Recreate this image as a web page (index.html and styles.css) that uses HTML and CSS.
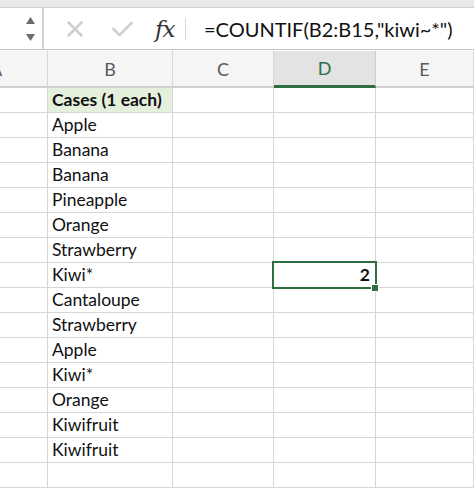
FILE: index.html
```html
<!DOCTYPE html>
<html>
<head>
<meta charset="utf-8">
<link rel="stylesheet" href="styles.css">
</head>
<body>
<div class="app">
  <div class="topstrip"></div>
  <div class="fbar">
    <div class="namebox">
      <div class="stepper">
        <svg width="9" height="8" viewBox="0 0 9 8"><polygon points="4.5,0 9,7 0,7" fill="#6b6b6b"/></svg>
        <svg width="9" height="8" viewBox="0 0 9 8"><polygon points="0,0 9,0 4.5,7" fill="#6b6b6b"/></svg>
      </div>
    </div>
    <div class="icons">
      <svg class="ico-x" width="16" height="16" viewBox="0 0 16 16"><path d="M1.5 1.5 L14.5 14.5 M14.5 1.5 L1.5 14.5" stroke="#cfcfcf" stroke-width="2.6" stroke-linecap="round"/></svg>
      <svg class="ico-check" width="21" height="16" viewBox="0 0 21 16"><path d="M1.5 8 L7.5 14 L19.5 2" stroke="#cfcfcf" stroke-width="2.6" fill="none" stroke-linecap="round" stroke-linejoin="round"/></svg>
      <span class="fx">fx</span>
      <span class="sep"></span>
    </div>
    <div class="formula">=COUNTIF(B2:B15,"kiwi~*")</div>
  </div>
  <div class="sheet">
    <div class="hdr colA"><span class="acut">A</span></div>
    <div class="hdr">B</div>
    <div class="hdr">C</div>
    <div class="hdr active">D</div>
    <div class="hdr">E</div>

    <div class="c"></div><div class="c b title">Cases (1 each)</div><div class="c"></div><div class="c"></div><div class="c"></div>
    <div class="c"></div><div class="c b">Apple</div><div class="c"></div><div class="c"></div><div class="c"></div>
    <div class="c"></div><div class="c b">Banana</div><div class="c"></div><div class="c"></div><div class="c"></div>
    <div class="c"></div><div class="c b">Banana</div><div class="c"></div><div class="c"></div><div class="c"></div>
    <div class="c"></div><div class="c b">Pineapple</div><div class="c"></div><div class="c"></div><div class="c"></div>
    <div class="c"></div><div class="c b">Orange</div><div class="c"></div><div class="c"></div><div class="c"></div>
    <div class="c"></div><div class="c b">Strawberry</div><div class="c"></div><div class="c"></div><div class="c"></div>
    <div class="c"></div><div class="c b">Kiwi*</div><div class="c"></div><div class="c sel"><span class="num">2</span><span class="handle"></span></div><div class="c"></div>
    <div class="c"></div><div class="c b">Cantaloupe</div><div class="c"></div><div class="c"></div><div class="c"></div>
    <div class="c"></div><div class="c b">Strawberry</div><div class="c"></div><div class="c"></div><div class="c"></div>
    <div class="c"></div><div class="c b">Apple</div><div class="c"></div><div class="c"></div><div class="c"></div>
    <div class="c"></div><div class="c b">Kiwi*</div><div class="c"></div><div class="c"></div><div class="c"></div>
    <div class="c"></div><div class="c b">Orange</div><div class="c"></div><div class="c"></div><div class="c"></div>
    <div class="c"></div><div class="c b">Kiwifruit</div><div class="c"></div><div class="c"></div><div class="c"></div>
    <div class="c"></div><div class="c b">Kiwifruit</div><div class="c"></div><div class="c"></div><div class="c"></div>
    <div class="c"></div><div class="c b"></div><div class="c"></div><div class="c"></div><div class="c"></div>
  </div>
</div>
</body>
</html>
```
FILE: styles.css
```css
html, body {
  margin: 0;
  padding: 0;
  background: #ffffff;
}
.app {
  width: 474px;
  height: 495px;
  overflow: hidden;
  font-family: "Lato", "Open Sans", sans-serif;
  color: #111;
}
.topstrip {
  height: 7px;
  background: #e9e9e9;
  border-bottom: 1px solid #d2d2d2;
}
.fbar {
  display: flex;
  align-items: stretch;
  height: 41px;
  background: #ffffff;
  border-bottom: 1px solid #c4c4c4;
}
.namebox {
  width: 42px;
  border-right: 2px solid #d3d3d3;
  display: flex;
  justify-content: flex-end;
  align-items: center;
}
.stepper {
  display: flex;
  flex-direction: column;
  gap: 9px;
  margin-right: 7px;
  margin-top: 1px;
}
.stepper svg {
  display: block;
}
.icons {
  display: flex;
  align-items: center;
  width: 149px;
}
.ico-x {
  margin-left: 23px;
  margin-top: 1px;
}
.ico-check {
  margin-left: 29px;
  margin-top: 1px;
}
.fx {
  font-family: "DejaVu Serif", "Liberation Serif", serif;
  font-style: italic;
  font-size: 23px;
  color: #333;
  margin-left: 22px;
  letter-spacing: -1px;
}
.sep {
  width: 1px;
  height: 22px;
  background: #d6d6d6;
  margin-left: 11px;
}
.formula {
  display: flex;
  align-items: center;
  padding-left: 11px;
  font-family: "Lato", "Open Sans", sans-serif;
  font-size: 20px;
  color: #111;
  white-space: nowrap;
}
.sheet {
  display: grid;
  grid-template-columns: 48px 125px 101px 102px 1fr;
  grid-template-rows: 38px;
  grid-auto-rows: 25px;
}
.hdr {
  background: #f5f5f5;
  border-right: 1px solid #d8d8d8;
  border-bottom: 2px solid #cfcfcf;
  border-top: 1px solid #ffffff;
  display: flex;
  align-items: center;
  justify-content: center;
  font-size: 18px;
  color: #5a5a5a;
  box-sizing: border-box;
}
.hdr.colA {
  justify-content: flex-start;
  overflow: hidden;
}
.acut {
  margin-left: -10px;
}
.hdr.active {
  background: #e3e3e3;
  color: #2f6e40;
  border-bottom: 3px solid #2f6e40;
  border-right: 1px solid #cfcfcf;
}
.c {
  border-right: 1px solid #d6d6d6;
  border-bottom: 1px solid #d6d6d6;
  box-sizing: border-box;
  font-size: 17.5px;
  line-height: 24px;
  padding-left: 4px;
  white-space: nowrap;
}
.c.title {
  background: #e4efdc;
  font-weight: 700;
}
.c.sel {
  position: relative;
  text-align: right;
  padding-right: 5px;
}
.c.sel::before {
  content: "";
  position: absolute;
  left: -2px;
  top: -2px;
  right: -2px;
  bottom: -2px;
  border: 2px solid #2f6e40;
}
.num {
  position: relative;
  font-weight: 700;
}
.handle {
  position: absolute;
  right: -4px;
  bottom: -5px;
  width: 6px;
  height: 6px;
  background: #2f6e40;
  border: 1px solid #ffffff;
}
```
